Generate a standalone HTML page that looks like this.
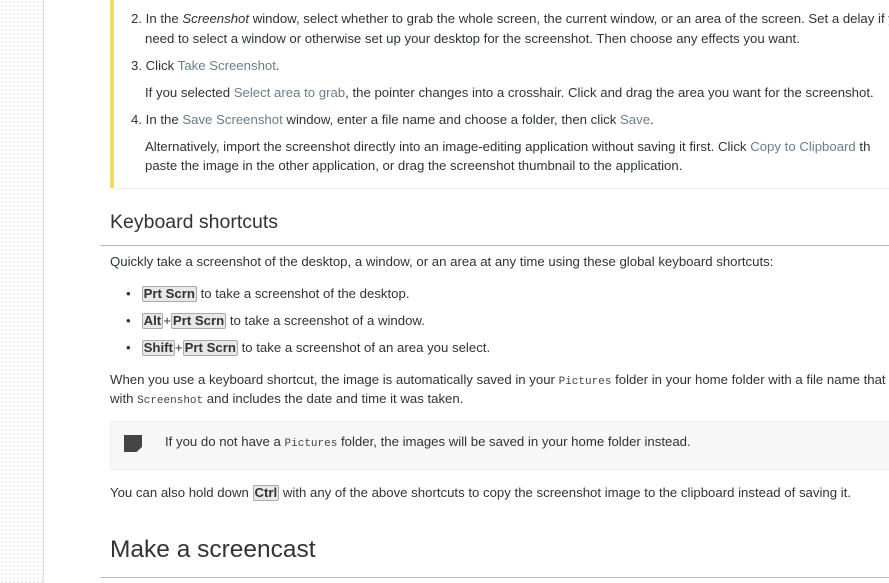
<!DOCTYPE html>
<html><head><meta charset="utf-8"><style>
body{margin:0;width:889px;height:583px;overflow:hidden;background:#fff;font-family:"Liberation Sans",sans-serif;font-size:13.2px;color:#2e3436;position:relative}
.side{position:absolute;left:0;top:0;width:43px;height:583px;background-color:#fff;background-image:radial-gradient(#cfcfcf 0.7px,transparent 0.8px);background-size:4px 4px;border-right:1px solid #ddd}
.l{position:absolute;white-space:nowrap}
.lk{color:#6b7d8a}
.k{display:inline-block;border:1px solid #aaa;background:#e8e8e8;border-radius:2px;padding:0 1px;font-weight:bold;line-height:14px;color:#333}
code{font-family:"Liberation Mono",monospace;font-size:11px;color:#444}
.bar{position:absolute;left:110px;top:0;width:4px;height:188px;background:#f0dc5e}
.hr{position:absolute;height:1px;background:#bbb}
</style></head><body>
<div class="side"></div>
<div class="bar"></div>
<div class="hr" style="left:114px;top:188px;width:775px;background:#eee"></div>
<div class="l" style="left:131px;top:11px">2. In the <i>Screenshot</i> window, select whether to grab the whole screen, the current window, or an area of the screen. Set a delay if y</div>
<div class="l" style="left:145px;top:31px">need to select a window or otherwise set up your desktop for the screenshot. Then choose any effects you want.</div>
<div class="l" style="left:131px;top:58px">3. Click <span class="lk">Take Screenshot</span>.</div>
<div class="l" style="left:145px;top:85px">If you selected <span class="lk">Select area to grab</span>, the pointer changes into a crosshair. Click and drag the area you want for the screenshot.</div>
<div class="l" style="left:131px;top:112px">4. In the <span class="lk">Save Screenshot</span> window, enter a file name and choose a folder, then click <span class="lk">Save</span>.</div>
<div class="l" style="left:145px;top:139px">Alternatively, import the screenshot directly into an image-editing application without saving it first. Click <span class="lk">Copy to Clipboard</span> th</div>
<div class="l" style="left:145px;top:158px">paste the image in the other application, or drag the screenshot thumbnail to the application.</div>
<div class="l" style="left:110px;top:211px;font-size:19.5px;color:#333">Keyboard shortcuts</div>
<div class="hr" style="left:100px;top:245px;width:789px"></div>
<div class="l" style="left:110px;top:254px">Quickly take a screenshot of the desktop, a window, or an area at any time using these global keyboard shortcuts:</div>
<div class="l" style="left:126px;top:286px">•&nbsp;&nbsp; <span class="k">Prt Scrn</span> to take a screenshot of the desktop.</div>
<div class="l" style="left:126px;top:313px">•&nbsp;&nbsp; <span class="k">Alt</span>+<span class="k">Prt Scrn</span> to take a screenshot of a window.</div>
<div class="l" style="left:126px;top:340px">•&nbsp;&nbsp; <span class="k">Shift</span>+<span class="k">Prt Scrn</span> to take a screenshot of an area you select.</div>
<div class="l" style="left:110px;top:372px">When you use a keyboard shortcut, the image is automatically saved in your <code>Pictures</code> folder in your home folder with a file name that</div>
<div class="l" style="left:110px;top:391px">with <code>Screenshot</code> and includes the date and time it was taken.</div>
<div style="position:absolute;left:110px;top:421px;width:779px;height:47px;background:#f7f7f7;border:1px solid #eee"></div>
<div style="position:absolute;left:124px;top:435px;width:18px;height:17px;background:#444;clip-path:polygon(0 0,100% 0,100% 70%,70% 100%,0 100%)"></div>
<div class="l" style="left:165px;top:434px">If you do not have a <code>Pictures</code> folder, the images will be saved in your home folder instead.</div>
<div class="l" style="left:110px;top:485px">You can also hold down <span class="k">Ctrl</span> with any of the above shortcuts to copy the screenshot image to the clipboard instead of saving it.</div>
<div class="l" style="left:110px;top:536px;font-size:24.5px;color:#333">Make a screencast</div>
<div class="hr" style="left:100px;top:577px;width:789px"></div>
</body></html>
